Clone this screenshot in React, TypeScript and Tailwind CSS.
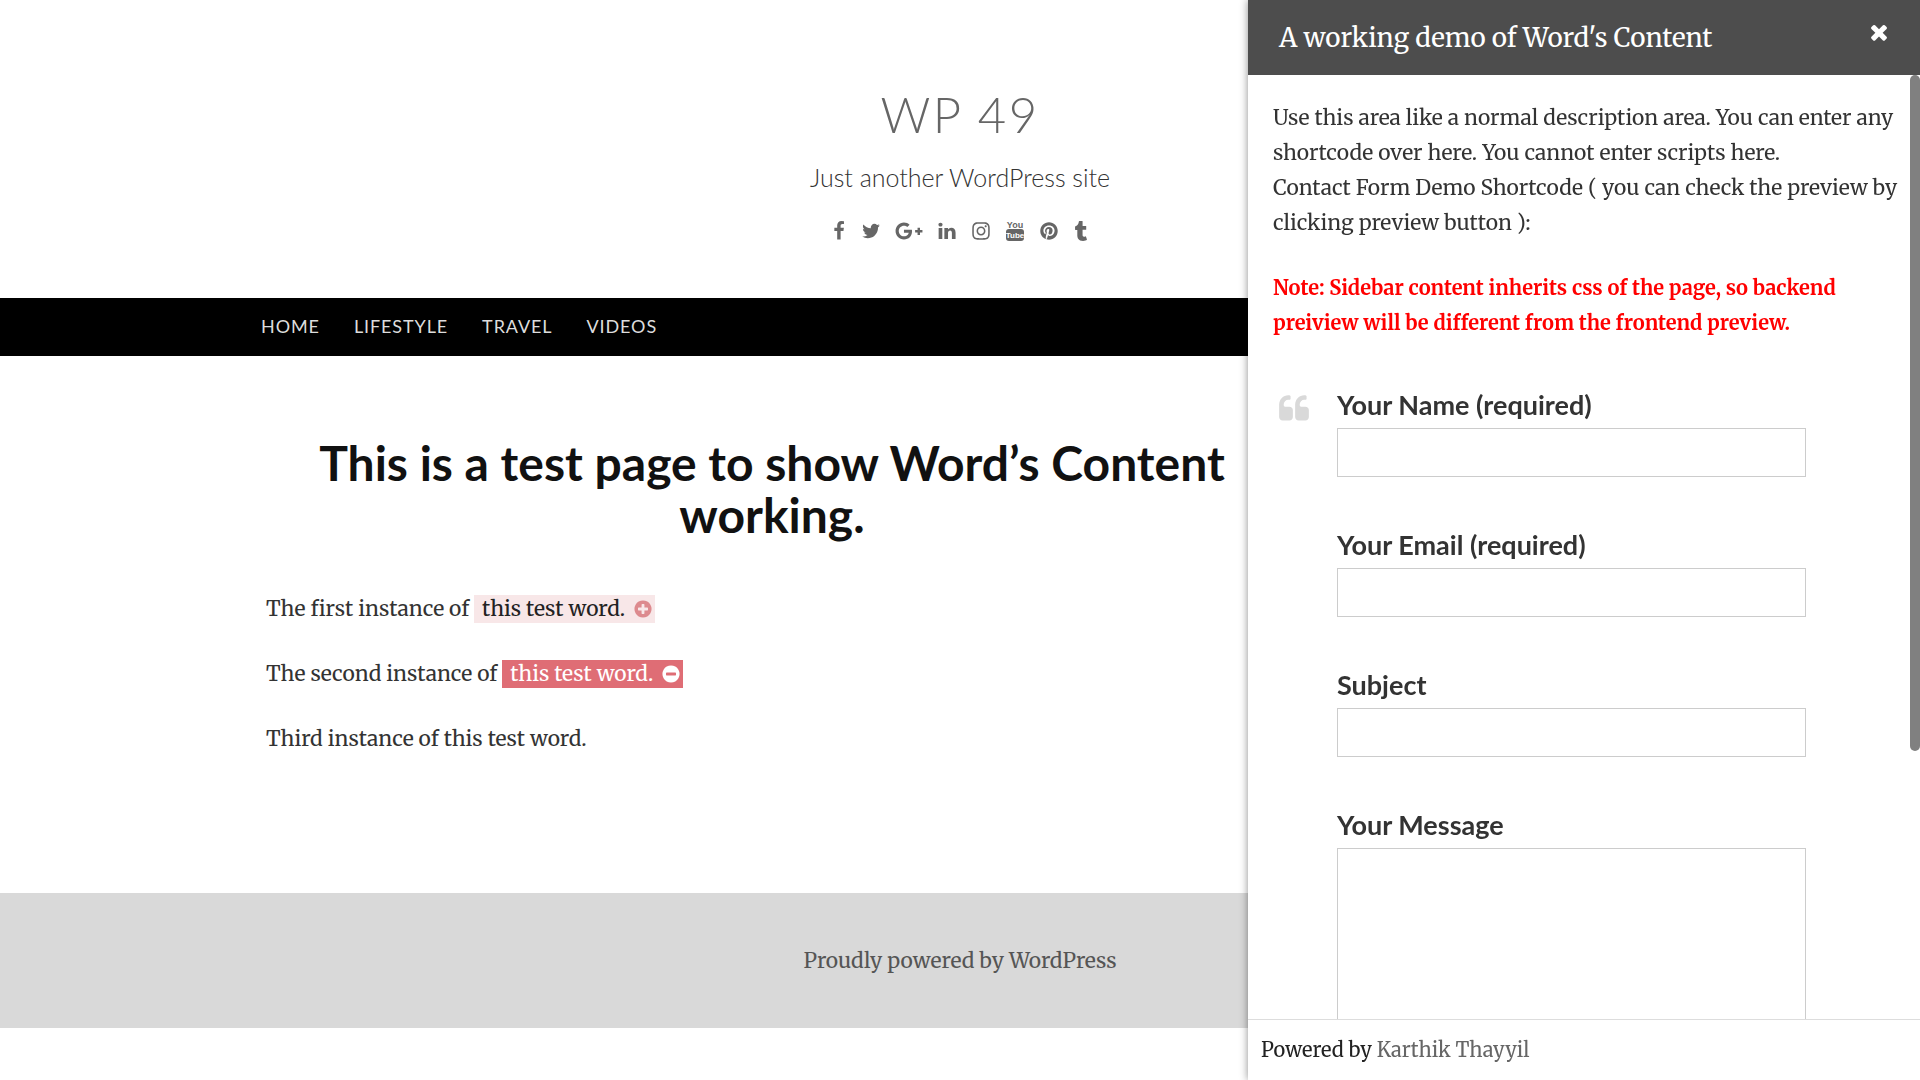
import type { ReactNode } from "react";
import { FaGooglePlusG, FaInstagram, FaPinterest, FaTumblr } from "react-icons/fa";

const SERIF = "font-['Merriweather','Noto_Serif','DejaVu_Serif_Condensed','DejaVu_Serif',serif]";

const CIRCLE =
  "zm320-64q0 209-103 385.5t-279.5 279.5-385.5 103-385.5-103-279.5-279.5-103-385.5 103-385.5 279.5-279.5 385.5-103 385.5 103 279.5 279.5 103 385.5z";

const GLYPHS = {
  facebook:
    "M1343 12v264h-157q-86 0-116 36t-30 108v189h293l-39 296h-254v759h-306v-759h-255v-296h255v-218q0-186 104-288.5t277-102.5q147 0 228 12z",
  twitter:
    "M1684 408q-67 98-162 167 1 14 1 42 0 130-38 259.5t-115.5 248.5-184.5 210.5-258 146-323 54.5q-271 0-496-145 35 4 78 4 225 0 401-138-105-2-188-64.5t-114-159.5q33 5 61 5 43 0 85-11-112-23-185.5-111.5t-73.5-205.5v-4q68 38 146 41-66-44-105-115t-39-154q0-88 44-163 121 149 294.5 238.5t371.5 99.5q-8-38-8-74 0-134 94.5-228.5t228.5-94.5q140 0 236 102 109-21 205-78-37 115-142 178 93-10 186-50z",
  linkedin:
    "M477 625v991h-330v-991h330zm21-306q1 73-50.5 122t-135.5 49h-2q-82 0-132-49t-50-122q0-74 51.5-122.5t134.5-48.5 133 48.5 51 122.5zm1166 729v568h-329v-530q0-105-40.5-164.5t-126.5-59.5q-63 0-105.5 34.5t-63.5 85.5q-11 30-11 81v553h-329q2-399 2-647t-1-296l-1-48h329v144h-2q20-32 41-56t56.5-52 87-43.5 114.5-15.5q171 0 275 113.5t104 332.5z",
  close:
    "M1490 1322q0 40-28 68l-136 136q-28 28-68 28t-68-28l-294-294-294 294q-28 28-68 28t-68-28l-136-136q-28-28-28-68t28-68l294-294-294-294q-28-28-28-68t28-68l136-136q28-28 68-28t68 28l294 294 294-294q28-28 68-28t68 28l136 136q28 28 28 68t-28 68l-294 294 294 294q28 28 28 68z",
  quote:
    "M832 960v384q0 80-56 136t-136 56h-384q-80 0-136-56t-56-136v-704q0-104 40.5-198.5t109.5-163.5 163.5-109.5 198.5-40.5h64q26 0 45 19t19 45v128q0 26-19 45t-45 19h-64q-106 0-181 75t-75 181v32q0 40 28 68t68 28h224q80 0 136 56t56 136zm896 0v384q0 80-56 136t-136 56h-384q-80 0-136-56t-56-136v-704q0-104 40.5-198.5t109.5-163.5 163.5-109.5 198.5-40.5h64q26 0 45 19t19 45v128q0 26-19 45t-45 19h-64q-106 0-181 75t-75 181v32q0 40 28 68t68 28h224q80 0 136 56t56 136z",
  plus:
    "M1344 960v-128q0-26-19-45t-45-19h-256v-256q0-26-19-45t-45-19h-128q-26 0-45 19t-19 45v256h-256q-26 0-45 19t-19 45v128q0 26 19 45t45 19h256v256q0 26 19 45t45 19h128q26 0 45-19t19-45v-256h256q26 0 45-19t19-45" +
    CIRCLE,
  minus:
    "M1344 960v-128q0-26-19-45t-45-19h-768q-26 0-45 19t-19 45v128q0 26 19 45t45 19h768q26 0 45-19t19-45" +
    CIRCLE,
};

function Glyph({ name, className }: { name: keyof typeof GLYPHS; className: string }) {
  return (
    <svg viewBox="0 0 1792 1792" fill="currentColor" aria-hidden="true" className={className}>
      <path d={GLYPHS[name]} />
    </svg>
  );
}

function YouTubeLogo() {
  return (
    <svg
      viewBox="0 0 18 20"
      textAnchor="middle"
      aria-hidden="true"
      className="h-5 w-[18px] font-['Liberation_Sans_Narrow','Liberation_Sans',sans-serif] text-[9px] font-bold"
    >
      <text x="9" y="7" fill="currentColor">
        You
      </text>
      <rect x="0" y="8" width="18" height="12" rx="3" fill="currentColor" />
      <text x="9" y="17" fill="#fff" className="text-[8px]">
        Tube
      </text>
    </svg>
  );
}

const SOCIAL: { label: string; width: string; icon: ReactNode }[] = [
  { label: "Facebook", width: "w-4", icon: <Glyph name="facebook" className="size-5 shrink-0" /> },
  { label: "Twitter", width: "w-5", icon: <Glyph name="twitter" className="size-5" /> },
  { label: "Google Plus", width: "w-7", icon: <FaGooglePlusG className="size-7" /> },
  { label: "LinkedIn", width: "w-5", icon: <Glyph name="linkedin" className="size-5" /> },
  { label: "Instagram", width: "w-5", icon: <FaInstagram className="size-5" /> },
  { label: "YouTube", width: "w-5", icon: <YouTubeLogo /> },
  { label: "Pinterest", width: "w-5", icon: <FaPinterest className="size-[18px]" /> },
  { label: "Tumblr", width: "w-4", icon: <FaTumblr className="size-5 shrink-0" /> },
];

function Word({ open, children }: { open?: boolean; children: string }) {
  return (
    <button
      type="button"
      aria-expanded={!!open}
      className={
        open
          ? "inline-flex h-7 items-center gap-2 bg-[#df6d75] pr-[2px] pl-2 align-baseline text-white"
          : "inline-flex h-7 items-center gap-2 bg-[#f8e7e8] pr-[2px] pl-2 align-baseline text-[#222]"
      }
    >
      {children}
      <Glyph
        name={open ? "minus" : "plus"}
        className={open ? "size-5 text-white" : "size-5 text-[#dd8a8e]"}
      />
    </button>
  );
}

function Field({ id, label, multiline }: { id: string; label: string; multiline?: boolean }) {
  return (
    <div className="flex flex-col gap-[5px]">
      <label htmlFor={id} className="font-['Lato',sans-serif] text-[27px] leading-9 font-bold text-[#333]">
        {label}
      </label>
      {multiline ? (
        <textarea id={id} className="h-[300px] w-full resize-none border border-[#ccc] bg-white px-3 py-2" />
      ) : (
        <input id={id} type="text" className="h-[49px] w-full border border-[#ccc] bg-white px-3" />
      )}
    </div>
  );
}

function Sidebar() {
  return (
    <aside
      className={`fixed inset-y-0 right-0 flex w-[35%] flex-col bg-white shadow-[0_0_8px_rgba(0,0,0,0.45)] ${SERIF}`}
    >
      <header className="flex h-[75px] shrink-0 items-center justify-between bg-[#4d4d4d] pr-[29px] pl-[31px] text-white">
        <h2 className="text-[26px]">A working demo of Word's Content</h2>
        <button type="button" aria-label="Close" className="mb-3">
          <Glyph name="close" className="size-6" />
        </button>
      </header>
      <div className="flex min-h-0 grow">
        <div className="min-w-0 grow overflow-hidden pt-[25px] pr-[10px] pl-[25px] text-xl leading-[35px] text-[#333]">
          <p className="text-[21px]">
            Use this area like a normal description area. You can enter any shortcode over here. You cannot enter
            scripts here.
            <br />
            Contact Form Demo Shortcode ( you can check the preview by clicking preview button ):
          </p>
          <p className="mt-[30px] font-bold text-[#f00]">
            Note: Sidebar content inherits css of the page, so backend preiview will be different from the frontend
            preview.
          </p>
          <form className="mt-[47px] flex pr-[94px]">
            <Glyph name="quote" className="mt-[6px] mr-[27px] ml-[5px] size-8 shrink-0 text-[#d9d9d9]" />
            <div className="flex grow flex-col gap-[50px]">
              <Field id="name" label="Your Name (required)" />
              <Field id="email" label="Your Email (required)" />
              <Field id="subject" label="Subject" />
              <Field id="message" label="Your Message" multiline />
            </div>
          </form>
        </div>
        <div className="w-[10px] shrink-0">
          <div className="h-[676px] rounded-full bg-[#808080]" />
        </div>
      </div>
      <footer className="flex h-[61px] shrink-0 items-center border-t border-[#ddd] px-[13px] text-xl text-[#222]">
        <p>
          Powered by{" "}
          <a href="#author" className="text-[#666]">
            Karthik Thayyil
          </a>
        </p>
      </footer>
    </aside>
  );
}

export default function App() {
  return (
    <div className={`min-h-screen bg-white text-[21px] text-[#333] ${SERIF}`}>
      <header className="flex h-[298px] flex-col items-center pt-[85px] font-['Lato',sans-serif]">
        <a href="#home" className="text-[49px] leading-[58px] font-light tracking-wider text-[#666]">
          WP 49
        </a>
        <p className="mt-4 text-[25px] leading-9 font-light">Just another WordPress site</p>
        <ul className="mt-[26px] flex items-center gap-[14px] text-[#666]">
          {SOCIAL.map((s) => (
            <li key={s.label}>
              <a href="#social" aria-label={s.label} className={`flex h-5 items-center justify-center ${s.width}`}>
                {s.icon}
              </a>
            </li>
          ))}
        </ul>
      </header>
      <nav className="h-[58px] bg-black">
        <ul className="mx-auto flex h-14 max-w-[1398px] items-center gap-[34px] font-['Lato',sans-serif] text-lg tracking-wider text-[#ddd]">
          {["HOME", "LIFESTYLE", "TRAVEL", "VIDEOS"].map((item) => (
            <li key={item}>
              <a href="#nav">{item}</a>
            </li>
          ))}
        </ul>
      </nav>
      <main className="mx-auto h-[537px] max-w-[1388px] pt-[81px]">
        <article className="max-w-[1012px]">
          <h1 className="text-center font-['Lato',sans-serif] text-5xl leading-[52px] font-bold text-[#111]">
            This is a test page to show Word’s Content working.
          </h1>
          <div className="mt-[50px] flex flex-col gap-[30px] leading-[35px]">
            <p>
              The first instance of <Word>this test word.</Word>
            </p>
            <p>
              The second instance of <Word open>this test word.</Word>
            </p>
            <p>Third instance of this test word.</p>
          </div>
        </article>
      </main>
      <footer className="flex h-[135px] items-center justify-center bg-[#d9d9d9]">
        <a href="#wordpress" className="text-[#555]">
          Proudly powered by WordPress
        </a>
      </footer>
      <Sidebar />
    </div>
  );
}
